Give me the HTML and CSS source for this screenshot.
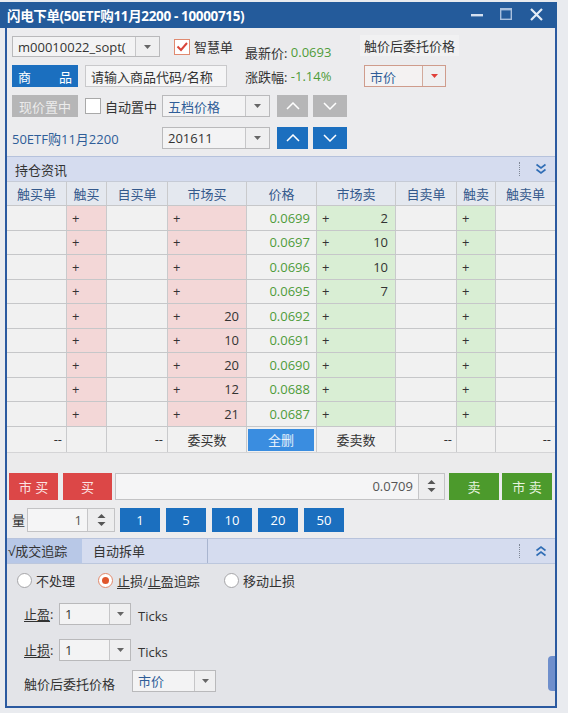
FILE: index.html
```html
<!DOCTYPE html>
<html lang="zh-CN">
<head>
<meta charset="utf-8">
<title>闪电下单</title>
<link rel="stylesheet" href="styles.css">
</head>
<body>
<div class="window">
  <div class="titlebar">
    <span class="title">闪电下单(50ETF购11月2200 - 10000715)</span>
    <svg class="winctl" width="80" height="26" viewBox="0 0 80 26">
      <rect x="5" y="12" width="12" height="2.4" fill="#d4e0f0"/>
      <rect x="34.7" y="6.7" width="10.6" height="10.6" fill="none" stroke="#a9c0de" stroke-width="1.4"/>
      <rect x="34" y="6" width="12" height="2.4" fill="#a9c0de"/>
      <path d="M65 7 L76 18 M76 7 L65 18" stroke="#e4ecf6" stroke-width="2.2"/>
    </svg>
  </div>
  <div class="frame">
    <div class="top">
      <div class="row r1">
        <div class="combo w148">
          <span class="combo-text">m00010022_sopt(</span>
          <span class="combo-btn"><svg width="7" height="4"><polygon points="0,0 7,0 3.5,4" fill="#666"/></svg></span>
        </div>
        <div class="checkgrp w71 ml14">
          <span class="checkbox checked"><svg width="14" height="14" viewBox="0 0 14 14"><path d="M2.5 6.5 L6 10 L12 3" fill="none" stroke="#d9453a" stroke-width="2"/></svg></span>
          <span class="chk-label">智慧单</span>
        </div>
        <div class="info w119 low">最新价: <span class="green">0.0693</span></div>
        <div class="trig-label">触价后委托价格</div>
      </div>
      <div class="row r2">
        <div class="btn blue w66 spread"><span>商</span><span>品</span></div>
        <div class="input w142 ml7">请输入商品代码/名称</div>
        <div class="info w119 ml18">涨跌幅: <span class="green">-1.14%</span></div>
        <div class="combo red w82">
          <span class="combo-text bluetext">市价</span>
          <span class="combo-btn"><svg width="7" height="4"><polygon points="0,0 7,0 3.5,4" fill="#e0403a"/></svg></span>
        </div>
      </div>
      <div class="row r3">
        <div class="btn gray w66">现价置中</div>
        <div class="checkgrp w77 ml7">
          <span class="checkbox"></span>
          <span class="chk-label">自动置中</span>
        </div>
        <div class="combo w108">
          <span class="combo-text bluetext">五档价格</span>
          <span class="combo-btn"><svg width="7" height="4"><polygon points="0,0 7,0 3.5,4" fill="#666"/></svg></span>
        </div>
        <div class="btn gray w31 ml7"><svg width="14" height="8" viewBox="0 0 14 8"><path d="M1 7 L7 1 L13 7" fill="none" stroke="#fff" stroke-width="1.5"/></svg></div>
        <div class="btn gray w34 ml5"><svg width="14" height="8" viewBox="0 0 14 8"><path d="M1 1 L7 7 L13 1" fill="none" stroke="#fff" stroke-width="1.5"/></svg></div>
      </div>
      <div class="row r4">
        <div class="contract w150">50ETF购11月2200</div>
        <div class="combo w108">
          <span class="combo-text">201611</span>
          <span class="combo-btn"><svg width="7" height="4"><polygon points="0,0 7,0 3.5,4" fill="#666"/></svg></span>
        </div>
        <div class="btn blue w31 ml7"><svg width="14" height="8" viewBox="0 0 14 8"><path d="M1 7 L7 1 L13 7" fill="none" stroke="#fff" stroke-width="1.5"/></svg></div>
        <div class="btn blue w34 ml5"><svg width="14" height="8" viewBox="0 0 14 8"><path d="M1 1 L7 7 L13 1" fill="none" stroke="#fff" stroke-width="1.5"/></svg></div>
      </div>
    </div>

    <div class="sectionbar">
      <span class="sec-title">持仓资讯</span>
      <span class="sec-sep"></span>
      <svg class="sec-chev" width="12" height="12" viewBox="0 0 12 12"><path d="M1.5 1.5 L6 5 L10.5 1.5 M1.5 6.5 L6 10 L10.5 6.5" fill="none" stroke="#2f6db5" stroke-width="1.6"/></svg>
    </div>

    <div class="book">
      <div class="brow head">
        <div class="c">触买单</div><div class="c">触买</div><div class="c">自买单</div><div class="c">市场买</div><div class="c">价格</div><div class="c">市场卖</div><div class="c">自卖单</div><div class="c">触卖</div><div class="c">触卖单</div>
      </div>
      <div class="brow">
        <div class="c"></div><div class="c pink lft">+</div><div class="c"></div><div class="c pink split"><span>+</span><span></span></div><div class="c price">0.0699</div><div class="c mint split"><span>+</span><span>2</span></div><div class="c"></div><div class="c mint lft">+</div><div class="c"></div>
      </div>
      <div class="brow">
        <div class="c"></div><div class="c pink lft">+</div><div class="c"></div><div class="c pink split"><span>+</span><span></span></div><div class="c price">0.0697</div><div class="c mint split"><span>+</span><span>10</span></div><div class="c"></div><div class="c mint lft">+</div><div class="c"></div>
      </div>
      <div class="brow">
        <div class="c"></div><div class="c pink lft">+</div><div class="c"></div><div class="c pink split"><span>+</span><span></span></div><div class="c price">0.0696</div><div class="c mint split"><span>+</span><span>10</span></div><div class="c"></div><div class="c mint lft">+</div><div class="c"></div>
      </div>
      <div class="brow">
        <div class="c"></div><div class="c pink lft">+</div><div class="c"></div><div class="c pink split"><span>+</span><span></span></div><div class="c price">0.0695</div><div class="c mint split"><span>+</span><span>7</span></div><div class="c"></div><div class="c mint lft">+</div><div class="c"></div>
      </div>
      <div class="brow">
        <div class="c"></div><div class="c pink lft">+</div><div class="c"></div><div class="c pink split"><span>+</span><span>20</span></div><div class="c price">0.0692</div><div class="c mint split"><span>+</span><span></span></div><div class="c"></div><div class="c mint lft">+</div><div class="c"></div>
      </div>
      <div class="brow">
        <div class="c"></div><div class="c pink lft">+</div><div class="c"></div><div class="c pink split"><span>+</span><span>10</span></div><div class="c price">0.0691</div><div class="c mint split"><span>+</span><span></span></div><div class="c"></div><div class="c mint lft">+</div><div class="c"></div>
      </div>
      <div class="brow">
        <div class="c"></div><div class="c pink lft">+</div><div class="c"></div><div class="c pink split"><span>+</span><span>20</span></div><div class="c price">0.0690</div><div class="c mint split"><span>+</span><span></span></div><div class="c"></div><div class="c mint lft">+</div><div class="c"></div>
      </div>
      <div class="brow">
        <div class="c"></div><div class="c pink lft">+</div><div class="c"></div><div class="c pink split"><span>+</span><span>12</span></div><div class="c price">0.0688</div><div class="c mint split"><span>+</span><span></span></div><div class="c"></div><div class="c mint lft">+</div><div class="c"></div>
      </div>
      <div class="brow">
        <div class="c"></div><div class="c pink lft">+</div><div class="c"></div><div class="c pink split"><span>+</span><span>21</span></div><div class="c price">0.0687</div><div class="c mint split"><span>+</span><span></span></div><div class="c"></div><div class="c mint lft">+</div><div class="c"></div>
      </div>
      <div class="brow foot">
        <div class="c rgt">--</div><div class="c"></div><div class="c rgt">--</div><div class="c ctr">委买数</div><div class="c delcell"><span class="delbtn">全删</span></div><div class="c ctr">委卖数</div><div class="c rgt">--</div><div class="c"></div><div class="c rgt">--</div>
      </div>
    </div>

    <div class="spacer"></div>

    <div class="order-row">
      <div class="btn redb w49 ml2">市 买</div>
      <div class="btn redb w49 ml5">买</div>
      <div class="spin-input w330 ml3">
        <span class="spin-val">0.0709</span>
        <span class="spinner"><svg width="9" height="16" viewBox="0 0 9 16"><polygon points="0.5,6 8.5,6 4.5,2" fill="#555"/><polygon points="0.5,10 8.5,10 4.5,14" fill="#555"/></svg></span>
      </div>
      <div class="btn greenb w50 ml4">卖</div>
      <div class="btn greenb w50 ml3">市 卖</div>
    </div>

    <div class="qty-row">
      <span class="qty-label">量</span>
      <div class="spin-input w88">
        <span class="spin-val">1</span>
        <span class="spinner"><svg width="9" height="16" viewBox="0 0 9 16"><polygon points="0.5,6 8.5,6 4.5,2" fill="#555"/><polygon points="0.5,10 8.5,10 4.5,14" fill="#555"/></svg></span>
      </div>
      <div class="btn blue w40 ml5">1</div>
      <div class="btn blue w40 ml6">5</div>
      <div class="btn blue w40 ml6">10</div>
      <div class="btn blue w40 ml6">20</div>
      <div class="btn blue w40 ml6">50</div>
    </div>

    <div class="tabbar">
      <span class="tab active">√成交追踪</span>
      <span class="tab second">自动拆单</span>
      <span class="tab-fill"></span>
      <span class="sec-sep"></span>
      <svg class="sec-chev" width="12" height="12" viewBox="0 0 12 12"><path d="M1.5 5.5 L6 2 L10.5 5.5 M1.5 10.5 L6 7 L10.5 10.5" fill="none" stroke="#2f6db5" stroke-width="1.6"/></svg>
    </div>

    <div class="panel">
      <div class="radio-row">
        <label class="radio-grp w81"><span class="radio"></span><span>不处理</span></label>
        <label class="radio-grp w126"><span class="radio on"><span class="dot"></span></span><span><u>止</u>损/<u>止</u>盈追踪</span></label>
        <label class="radio-grp"><span class="radio"></span><span>移动止损</span></label>
      </div>
      <div class="prow p1">
        <span class="plabel w35"><u>止盈</u>:</span>
        <div class="combo w72">
          <span class="combo-text">1</span>
          <span class="combo-btn nb"><svg width="7" height="4"><polygon points="0,0 7,0 3.5,4" fill="#666"/></svg></span>
        </div>
        <span class="ticks">Ticks</span>
      </div>
      <div class="prow p2">
        <span class="plabel w35"><u>止损</u>:</span>
        <div class="combo w72">
          <span class="combo-text">1</span>
          <span class="combo-btn nb"><svg width="7" height="4"><polygon points="0,0 7,0 3.5,4" fill="#666"/></svg></span>
        </div>
        <span class="ticks">Ticks</span>
      </div>
      <div class="prow p3">
        <span class="plabel w108">触价后委托价格</span>
        <div class="combo w84">
          <span class="combo-text bluetext">市价</span>
          <span class="combo-btn"><svg width="7" height="4"><polygon points="0,0 7,0 3.5,4" fill="#666"/></svg></span>
        </div>
      </div>
      <span class="scroll-blob"></span>
    </div>
  </div>
</div>
</body>
</html>
```
FILE: styles.css
```css
* { box-sizing: border-box; }

body {
  margin: 0;
  background: #e9ebef;
  font-family: "Open Sans", "Noto Sans CJK SC", sans-serif;
  font-size: 13px;
  color: #333;
}

.window { width: 557px; margin-top: 2px; }

.titlebar {
  height: 26px;
  background: #245b9b;
  display: flex;
  align-items: center;
  padding-left: 7px;
}
.title { color: #fff; font-weight: bold; font-size: 13.5px; flex: 1; white-space: nowrap; letter-spacing: -0.35px; }
.winctl { margin-right: 11px; display: block; }

.frame {
  margin-left: 5px;
  width: 552px;
  border-left: 2px solid #2b5aa0;
  border-right: 2px solid #2b5aa0;
  border-bottom: 2px solid #2b5aa0;
  background: #ececee;
}

/* top block */
.top { padding: 8px 0 7px 5px; height: 128px; }
.row { display: flex; align-items: center; }
.r1 { height: 21px; }
.r2 { height: 22px; margin-top: 8px; }
.r3 { height: 22px; margin-top: 8px; }
.r4 { height: 22px; margin-top: 10px; }
.row > * { height: 100%; flex: none; }

.w31 { width: 31px; } .w34 { width: 34px; } .w35 { width: 35px; } .w40 { width: 40px; }
.w49 { width: 49px; } .w50 { width: 50px; } .w66 { width: 66px; } .w71 { width: 71px; }
.w72 { width: 72px; } .w77 { width: 77px; } .w81 { width: 81px; } .w82 { width: 82px; }
.w84 { width: 84px; } .w88 { width: 88px; } .w108 { width: 108px; } .w119 { width: 119px; }
.w126 { width: 126px; } .w142 { width: 142px; } .w148 { width: 148px; } .w150 { width: 150px; }
.w330 { width: 330px; }
.ml2 { margin-left: 2px; } .ml3 { margin-left: 3px; } .ml4 { margin-left: 4px; } .ml5 { margin-left: 5px; }
.ml6 { margin-left: 6px; } .ml7 { margin-left: 7px; } .ml14 { margin-left: 14px; } .ml18 { margin-left: 18px; }

.combo {
  display: flex;
  align-items: stretch;
  background: #f3f3f4;
  border: 1px solid #b9b9bb;
}
.combo.red { border-color: #cf9c8c; background: #f4f2f2; }
.combo-text { flex: 1; display: flex; align-items: center; padding-left: 5px; white-space: nowrap; overflow: hidden; }
.combo-btn {
  width: 24px;
  border-left: 1px solid #c6c6c8;
  display: flex; align-items: center; justify-content: center;
  background: #efeff0;
}
.combo.red .combo-btn { border-left-color: #d2aa9c; width: 23px; }
.prow .combo-btn { width: 21px; }
.bluetext { color: #2f5d98; }

.checkgrp { display: flex; align-items: center; }
.checkbox {
  width: 16px; height: 16px;
  background: #fff;
  border: 1px solid #a9a9a9;
  display: flex; align-items: center; justify-content: center;
}
.checkbox.checked { border-color: #e08a70; }
.chk-label { margin-left: 4px; white-space: nowrap; }

.info { display: flex; align-items: center; white-space: pre; }
.info.low { padding-top: 11px; }
.green { color: #4f9c3a; }
.trig-label { display: flex; align-items: center; background: #f1f1f2; padding: 0 4px; margin-left: -4px; white-space: nowrap; margin-top: -2px; }

.btn {
  display: flex; align-items: center; justify-content: center;
  white-space: nowrap;
  color: #fff;
}
.btn.blue { background: #1b6fbf; }
.btn.gray { background: #b6b6b7; color: #ececec; }
.btn.spread { justify-content: space-between; padding: 0 6px; }
.btn.redb { background: #dc4747; color: #fbe3e3; }
.btn.greenb { background: #4c9a2c; color: #e6f3df; }

.input {
  display: flex; align-items: center;
  background: #f5f5f6;
  border: 1px solid #c9c9cb;
  padding-left: 5px;
  white-space: nowrap;
}
.contract { display: flex; align-items: center; color: #2f5d98; white-space: nowrap; }

/* section bar */
.sectionbar {
  height: 25px;
  border-top: 1px solid #b6c2dc;
  background: #d5dcef;
  display: flex; align-items: center;
  padding-left: 8px;
}
.sec-title { flex: 1; }
.sec-sep { width: 0; height: 14px; border-left: 1px dotted #7f8796; margin-right: 15px; }
.sec-chev { margin-right: 8px; display: block; flex: none; }

/* order book */
.book { background: #f1f1f1; }
.brow {
  display: grid;
  grid-template-columns: 60px 40px 61px 79px 70px 79px 61px 39px 59px;
  height: 24.5px;
  border-bottom: 1px solid #c6c7c9;
}
.brow.head { height: 25px; background: #e4e8ef; color: #34598c; border-top: 1px solid #c6cbd6; }
.brow.foot { height: 25px; border-bottom: none; }
.c {
  border-right: 1px solid #c9cacc;
  display: flex; align-items: center;
  padding: 0 5px;
  white-space: nowrap;
}
.c:last-child { border-right: none; }
.head .c { justify-content: center; padding: 0; }
.pink { background: #f3d7d7; }
.mint { background: #d9eed4; }
.split { justify-content: space-between; padding-right: 7px; }
.price { justify-content: flex-end; color: #4f9c3a; padding-right: 6px; }
.rgt { justify-content: flex-end; padding-right: 4px; }
.ctr { justify-content: center; }
.delcell { padding: 2px 2px 1px 1px; }
.delbtn {
  flex: 1; height: 100%;
  background: #3a8de0; color: #e8f2fc;
  display: flex; align-items: center; justify-content: center;
}

.spacer { height: 21px; background: #ebebec; border-top: 1px solid #d4d4d6; }

/* order row */
.order-row { display: flex; height: 27px; }
.order-row > * { flex: none; }
.spin-input {
  display: flex;
  background: #f5f5f6;
  border: 1px solid #c3c3c5;
}
.spin-val { flex: 1; display: flex; align-items: center; justify-content: flex-end; padding-right: 5px; color: #555; }
.spinner {
  width: 26px;
  border-left: 1px solid #c6c6c8;
  background: #ededee;
  display: flex; align-items: center; justify-content: center;
}

.qty-row { display: flex; align-items: stretch; height: 24px; margin-top: 8px; }
.qty-row > * { flex: none; }
.qty-label { width: 20px; padding-left: 5px; display: flex; align-items: center; }
.qty-row .spinner { width: 27px; }

/* tabs */
.tabbar {
  display: flex; align-items: center;
  height: 26px; margin-top: 6px;
  background: #d5dcef;
  border-top: 1px solid #b8c3dc;
  border-bottom: 1px solid #bcc7dd;
}
.tab { height: 100%; display: flex; align-items: center; white-space: nowrap; flex: none; }
.tab.active { width: 75px; background: #b8c8e7; padding-left: 1px; }
.tab.second { width: 126px; padding-left: 11px; border-right: 1px solid #a9b5cf; }
.tab-fill { flex: 1; }

/* panel */
.panel { position: relative; height: 142px; background: #e3e4e8; padding: 7px 0 0 10px; }
.radio-row { display: flex; align-items: center; height: 20px; }
.radio-grp { display: flex; align-items: center; white-space: nowrap; flex: none; }
.radio {
  width: 15px; height: 15px; border-radius: 50%;
  background: #fff; border: 1px solid #a5a5a8;
  margin-right: 4px;
  display: flex; align-items: center; justify-content: center;
}
.radio.on { border-color: #e2886a; }
.dot { width: 7px; height: 7px; border-radius: 50%; background: #e0562c; }
u { text-decoration-thickness: 1px; text-underline-offset: 2px; }

.prow { display: flex; align-items: stretch; height: 22px; padding-left: 7px; }
.prow > * { flex: none; }
.p1 { margin-top: 12px; }
.p2 { margin-top: 14px; }
.p3 { margin-top: 9px; }
.plabel { display: flex; align-items: center; white-space: nowrap; }
.p3 .plabel { padding-top: 6px; }
.ticks { display: flex; align-items: center; margin-left: 7px; padding-top: 4px; }

.scroll-blob {
  position: absolute; right: 0; top: 92px;
  width: 7px; height: 35px;
  background: #6f8fcc;
  border-radius: 4px 0 0 4px;
}
```
